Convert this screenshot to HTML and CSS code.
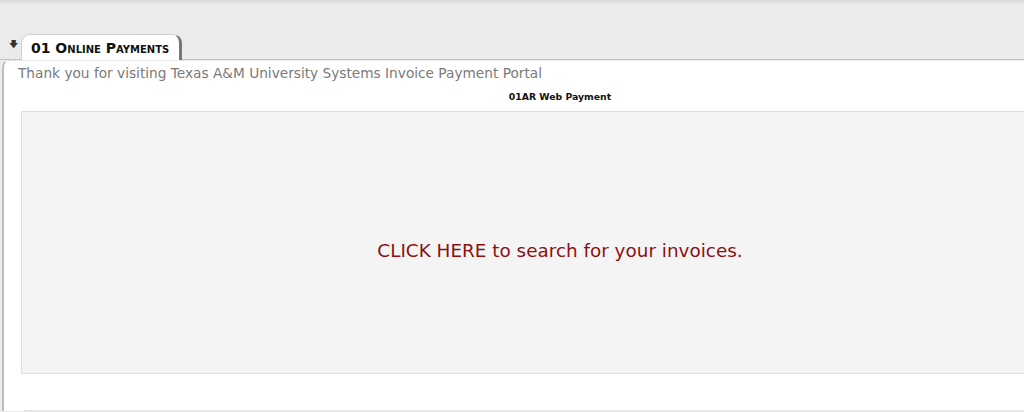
FILE: index.html
```html
<!DOCTYPE html>
<html lang="en">
<head>
    <meta charset="UTF-8">
    <meta name="viewport" content="width=device-width, initial-scale=1.0">
    <title>01 Online Payments</title>
    <link rel="stylesheet" href="styles.css">
</head>
<body>
    <div class="topbar"></div>
    <div class="tabs">
        <span class="flecha">&#129095;</span>
        <div class="tab">01 Online Payments</div>
    </div>
    <div class="panel">
        <p class="bienvenida">Thank you for visiting Texas A&amp;M University Systems Invoice Payment Portal</p>
        <h3 class="titulo">01AR Web Payment</h3>
        <div class="caja">
            <a class="buscar" href="#">CLICK HERE to search for your invoices.</a>
        </div>
    </div>
</body>
</html>
```

FILE: styles.css
```css
body{
    margin: 0;
    font-family: 'DejaVu Sans', Verdana, sans-serif;
    background: #ebebea;
    overflow: hidden;
}
.topbar{
    height: 4px;
    background: linear-gradient(#d8d8d8, #e8e8e8);
}
.tabs{
    height: 56px;
    display: flex;
    align-items: flex-end;
    border-bottom: 1px solid #c3c3c1;
    box-sizing: border-box;
    padding-left: 9px;
}
.flecha{
    font-size: 9px;
    color: #333;
    margin-bottom: 6px;
    width: 12px;
}
.tab{
    background: #fff;
    height: 25px;
    width: 148px;
    padding-left: 9px;
    line-height: 26px;
    font-size: 14px;
    font-weight: bold;
    font-variant: small-caps;
    color: #111;
    border: 1px solid #cfcfcf;
    border-bottom: none;
    border-right: 3px solid #777;
    border-radius: 9px 9px 0 0;
    margin-bottom: -1px;
}
.panel{
    background: #fff;
    margin-left: 2px;
    border-left: 2px solid #bdbdbd;
    border-top: 1px dotted #d6d6d6;
    border-top-left-radius: 7px;
    height: 350px;
    position: relative;
}
.bienvenida{
    margin: 0;
    padding: 4px 0 0 14px;
    font-size: 13.7px;
    color: #7a7a7a;
}
.titulo{
    margin: 10px 0 0;
    padding-left: 92px;
    text-align: center;
    font-size: 9.3px;
    color: #111;
}
.caja{
    margin: 9px 0 0 17px;
    padding-left: 74px;
    height: 261px;
    background: #f4f4f4;
    border: 1px solid #dcdcdc;
    border-right: none;
    display: flex;
    align-items: center;
    justify-content: center;
}
.buscar{
    color: #8b1111;
    text-decoration: none;
    font-size: 18.4px;
    margin-top: 16px;
}
.panel::after{
    content: '';
    position: absolute;
    left: 20px;
    right: 0;
    bottom: 0;
    border-bottom: 1px dotted #cfcfcf;
}
```
